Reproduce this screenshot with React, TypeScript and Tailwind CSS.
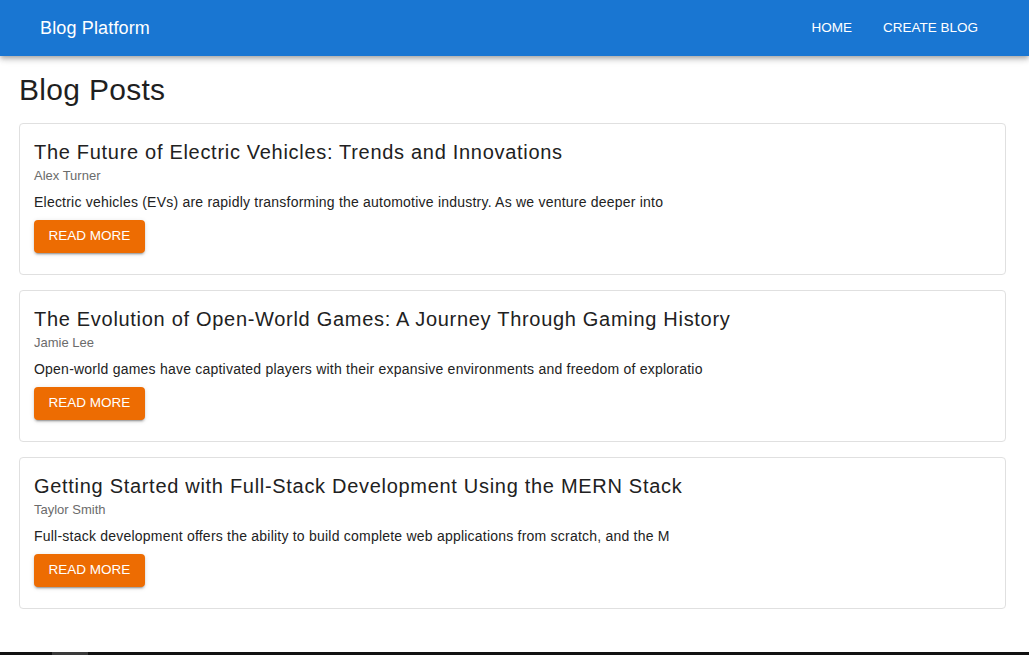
type Post = {
  _id: string;
  title: string;
  author: string;
  content: string;
};

const posts: Post[] = [
  {
    _id: "1",
    title: "The Future of Electric Vehicles: Trends and Innovations",
    author: "Alex Turner",
    content:
      "Electric vehicles (EVs) are rapidly transforming the automotive industry. As we venture deeper into",
  },
  {
    _id: "2",
    title: "The Evolution of Open-World Games: A Journey Through Gaming History",
    author: "Jamie Lee",
    content:
      "Open-world games have captivated players with their expansive environments and freedom of exploratio",
  },
  {
    _id: "3",
    title: "Getting Started with Full-Stack Development Using the MERN Stack",
    author: "Taylor Smith",
    content:
      "Full-stack development offers the ability to build complete web applications from scratch, and the M",
  },
];

export default function App() {
  return (
    <div className="min-h-[655px] flex flex-col bg-white font-['Liberation_Sans',Arial,sans-serif]">
      {/* Navbar */}
      <header className="h-[56px] bg-[#1976d2] text-white flex items-center justify-between pl-[40px] pr-[43px] shadow-[0_2px_4px_-1px_rgba(0,0,0,0.2),0_4px_5px_0_rgba(0,0,0,0.14),0_1px_10px_0_rgba(0,0,0,0.12)] relative z-10">
        <h1 className="text-[18px] leading-none tracking-[0.15px]">Blog Platform</h1>
        <nav className="flex items-center gap-[15px]">
          <a className="px-2 py-[6px] text-[13.5px] uppercase cursor-pointer">Home</a>
          <a className="px-2 py-[6px] text-[13.5px] uppercase cursor-pointer">Create Blog</a>
        </nav>
      </header>

      {/* Posts */}
      <main className="flex-1 pl-[19px] pr-[23px]">
        <h2 className="mt-[16px] text-[30px] leading-[36px] tracking-[0.3px] text-[#1f1f1f]">Blog Posts</h2>
        <div className="mt-[15px] flex flex-col gap-[15px]">
          {posts.map((post) => (
            <div
              key={post._id}
              className="border border-[#e0e0e0] rounded-[4px] bg-white pt-[14px] pb-[21px] px-[14px]"
            >
              <h3 className="text-[20px] leading-[29px] tracking-[0.7px] text-[#212121]">{post.title}</h3>
              <p className="text-[13px] leading-[18px] text-[#6b6b6b]">{post.author}</p>
              <p className="mt-[7px] text-[14px] leading-[20px] tracking-[0.22px] text-[#222222]">{post.content}</p>
              <button className="mt-[8px] h-[33px] px-[14.5px] rounded-[4px] bg-[#ed6c02] text-white text-[13.5px] uppercase shadow-[0_3px_1px_-2px_rgba(0,0,0,0.2),0_2px_2px_0_rgba(0,0,0,0.14),0_1px_5px_0_rgba(0,0,0,0.12)]">
                Read More
              </button>
            </div>
          ))}
        </div>
      </main>

      {/* bottom strip */}
      <div className="h-[3px] bg-[#111111] flex">
        <div className="ml-[52px] w-[36px] bg-[#3a3a3a]" />
      </div>
    </div>
  );
}
